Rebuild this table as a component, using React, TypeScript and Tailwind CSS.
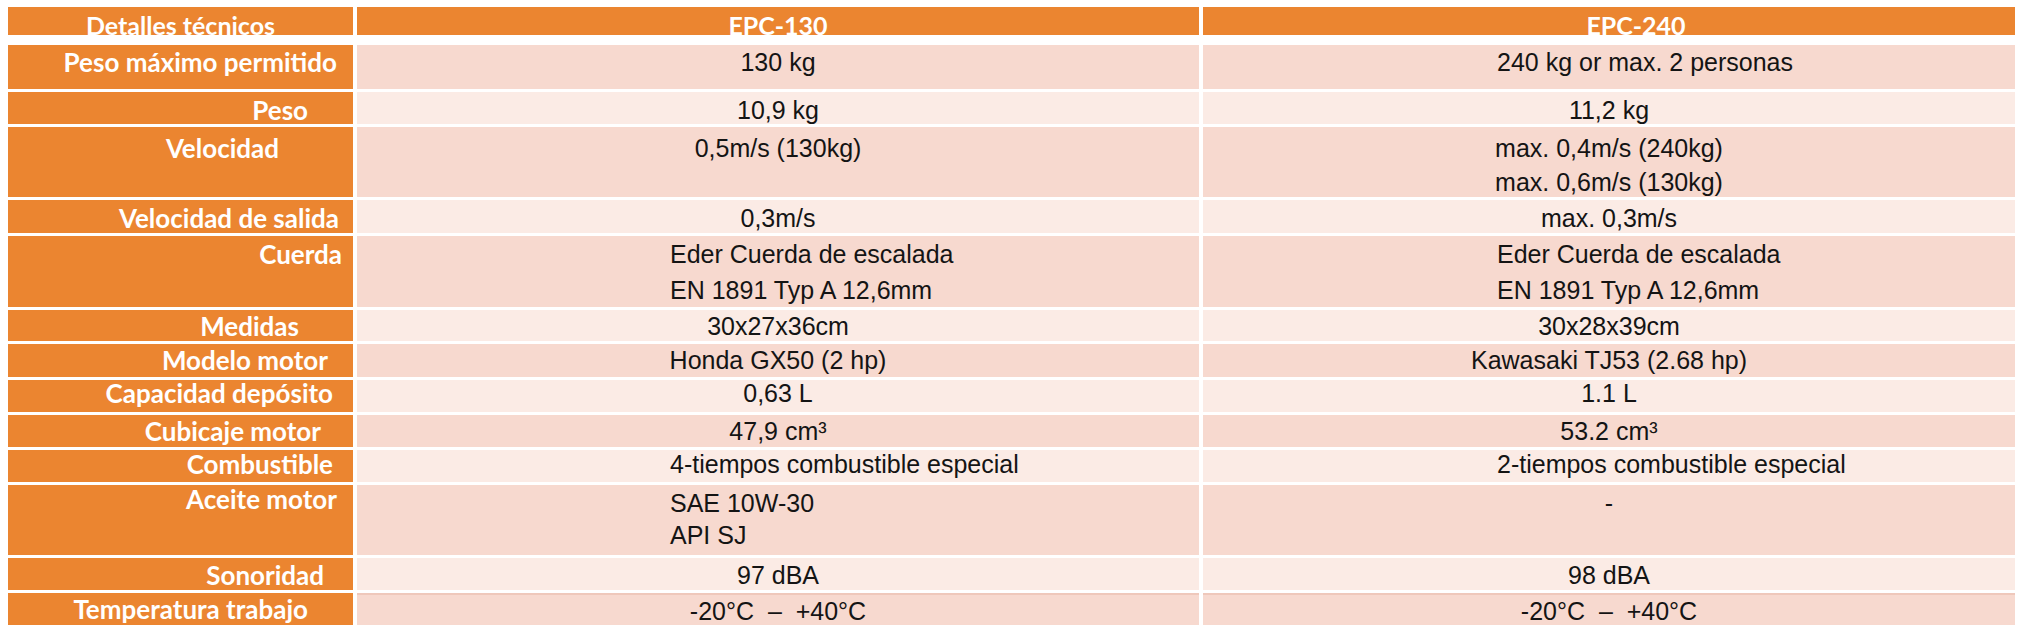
type Row = {
  label: string;
  pr: number; // right padding of the label
  h: number;
  lh: number; // line height of the values
  pt: number; // top padding of the values
  dark: boolean;
  a: string[];
  b: string[];
  leftA?: boolean; // value set flush left from the indent, as in the source
  leftB?: boolean;
  line?: boolean; // thin darker rule on top of the value cells
};

const rows: Row[] = [
  { label: "Peso máximo permitido", pr: 16, h: 44, lh: 32, pt: 1, dark: true, a: ["130 kg"], b: ["240 kg or max. 2 personas"], leftB: true },
  { label: "Peso", pr: 45, h: 32, lh: 32, pt: 2, dark: false, a: ["10,9 kg"], b: ["11,2 kg"] },
  { label: "Velocidad", pr: 74, h: 70, lh: 34, pt: 4, dark: true, a: ["0,5m/s (130kg)"], b: ["max. 0,4m/s (240kg)", "max. 0,6m/s (130kg)"] },
  { label: "Velocidad de salida", pr: 14, h: 33, lh: 32, pt: 2, dark: false, a: ["0,3m/s"], b: ["max. 0,3m/s"] },
  { label: "Cuerda", pr: 11, h: 71, lh: 36, pt: 0, dark: true, a: ["Eder Cuerda de escalada", "EN 1891 Typ A 12,6mm"], b: ["Eder Cuerda de escalada", "EN 1891 Typ A 12,6mm"], leftA: true, leftB: true },
  { label: "Medidas", pr: 54, h: 31, lh: 32, pt: 0, dark: false, a: ["30x27x36cm"], b: ["30x28x39cm"] },
  { label: "Modelo motor", pr: 25, h: 33, lh: 32, pt: 0, dark: true, a: ["Honda GX50 (2 hp)"], b: ["Kawasaki TJ53 (2.68 hp)"] },
  { label: "Capacidad depósito", pr: 20, h: 32, lh: 27, pt: 0, dark: false, a: ["0,63 L"], b: ["1.1 L"] },
  { label: "Cubicaje motor", pr: 32, h: 32, lh: 32, pt: 0, dark: true, a: ["47,9 cm³"], b: ["53.2 cm³"] },
  { label: "Combustible", pr: 20, h: 32, lh: 29, pt: 0, dark: false, a: ["4-tiempos combustible especial"], b: ["2-tiempos combustible especial"], leftA: true, leftB: true },
  { label: "Aceite motor", pr: 16, h: 70, lh: 32, pt: 2, dark: true, a: ["SAE 10W-30", "API SJ"], b: ["-"], leftA: true },
  { label: "Sonoridad", pr: 29, h: 32, lh: 32, pt: 1, dark: false, a: ["97 dBA"], b: ["98 dBA"] },
  { label: "Temperatura trabajo", pr: 45, h: 32, lh: 32, pt: 0, dark: true, a: ["-20°C  –  +40°C"], b: ["-20°C  –  +40°C"], line: true },
];

const orange = "bg-[#eb8530]";
const label = "font-['Lato',sans-serif] font-bold text-white";
const value = "font-['Liberation_Sans',Arial,sans-serif] text-[25px] text-[#141414] whitespace-pre";

function ValueCell({ row, lines, left, w, indent }: { row: Row; lines: string[]; left?: boolean; w: string; indent: string }) {
  const bg = row.dark ? "bg-[#f7d9cf]" : "bg-[#fbebe5]";
  return (
    <div
      className={`${w} ${bg} ${value} ${left ? `text-left ${indent}` : "text-center"} ${row.line ? "border-t-2 border-[#efc8bb]" : ""}`}
      style={{ height: row.h, paddingTop: row.pt, lineHeight: `${row.lh}px` }}
    >
      {lines.map((l) => (
        <div key={l}>{l}</div>
      ))}
    </div>
  );
}

export default function App() {
  return (
    <div className="min-h-screen bg-white pl-[8px] pt-[7px]">
      <div className="flex w-[2007px] flex-col gap-[3px]">
        {/* header */}
        <div className="mb-[7px] flex h-[28px] gap-[4px] text-[25px] leading-[37px]">
          <div className={`w-[345px] ${orange} text-center ${label}`}>Detalles técnicos</div>
          <div className={`w-[842px] ${orange} text-center ${label}`}>EPC-130</div>
          <div className={`w-[812px] ${orange} pl-[54px] text-center ${label}`}>EPC-240</div>
        </div>

        {rows.map((r) => (
          <div key={r.label} className="flex gap-[4px]">
            <div
              className={`w-[345px] ${orange} text-right text-[26px] ${label}`}
              style={{
                height: r.h,
                paddingRight: r.pr,
                paddingTop: r.label === "Aceite motor" ? 0 : r.pt,
                lineHeight: `${r.label === "Aceite motor" ? 28 : r.lh}px`,
              }}
            >
              {r.label}
            </div>
            <ValueCell row={r} lines={r.a} left={r.leftA} w="w-[842px]" indent="pl-[313px]" />
            <ValueCell row={r} lines={r.b} left={r.leftB} w="w-[812px]" indent="pl-[294px]" />
          </div>
        ))}
      </div>
    </div>
  );
}
